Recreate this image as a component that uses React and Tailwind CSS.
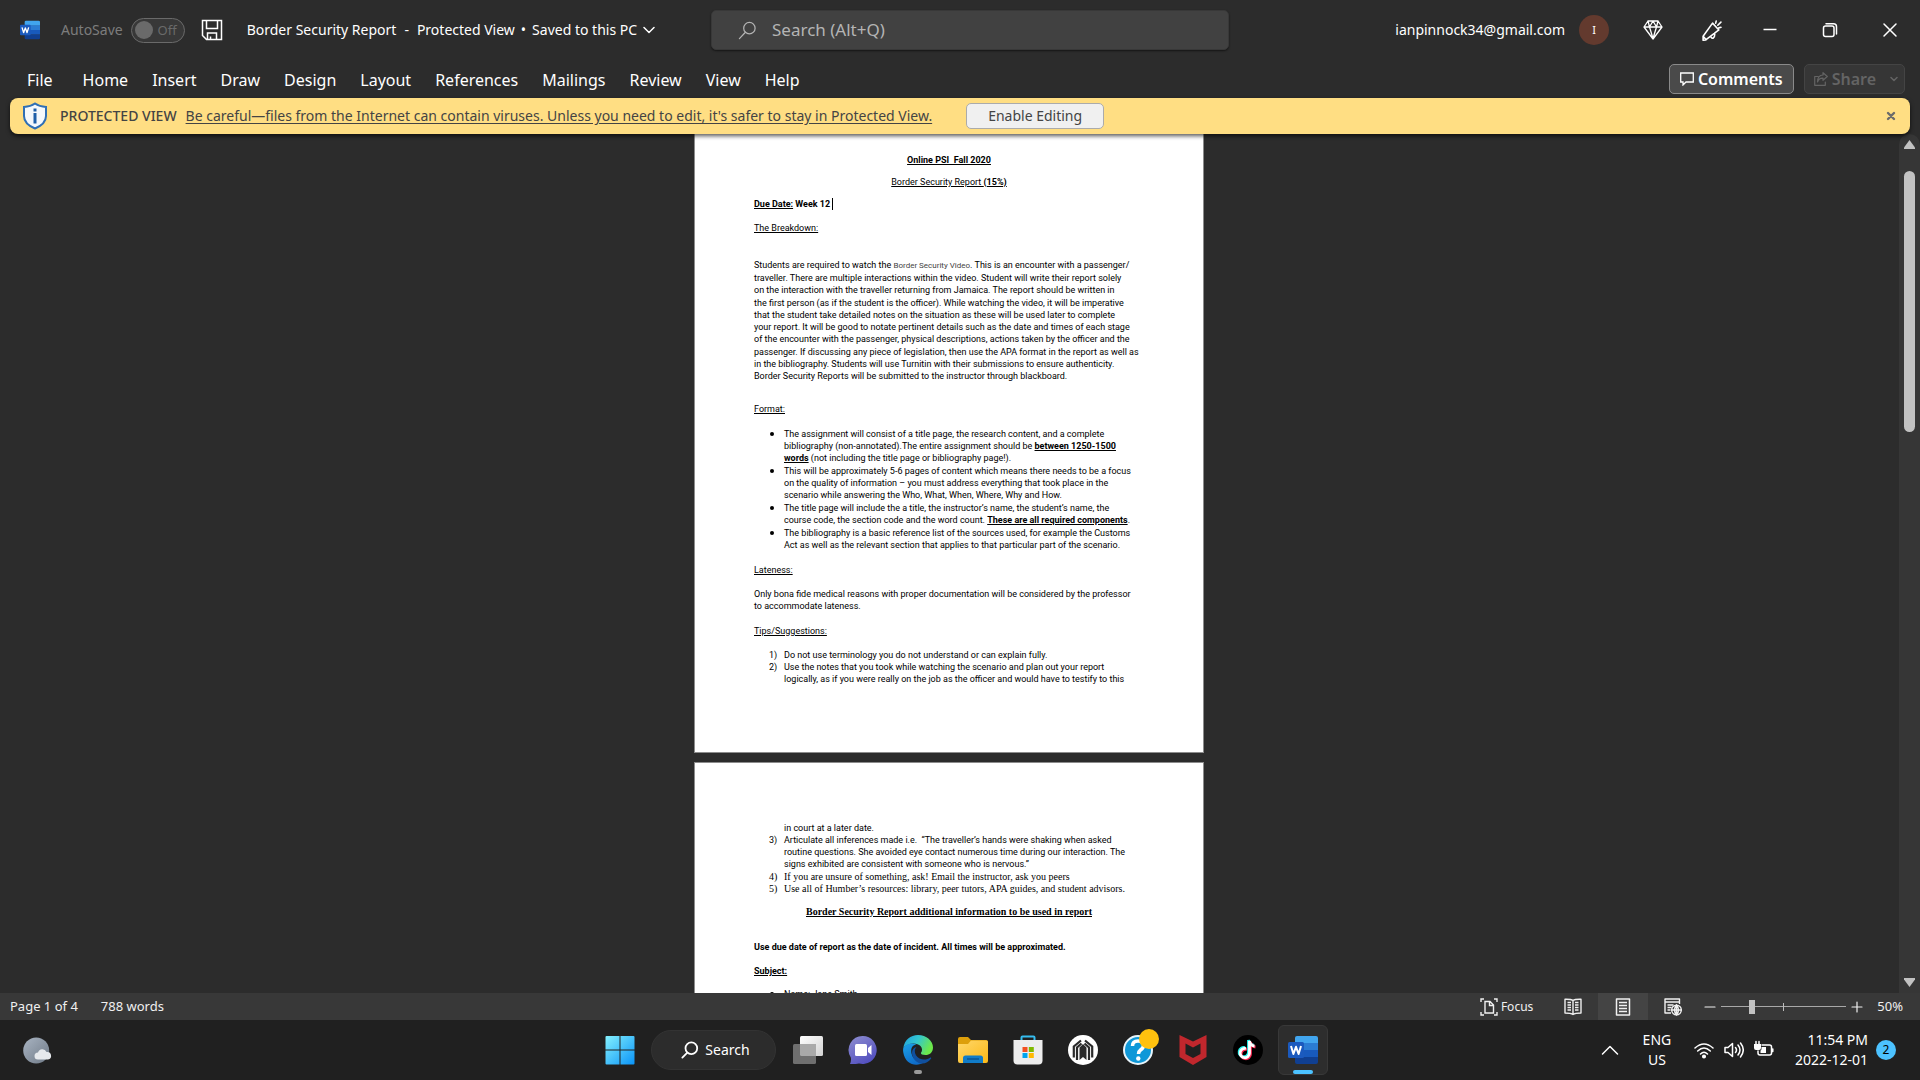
import React from "react";

function WordLogo({ className }) {
  return (
    <svg viewBox="0 0 30 28" className={className} aria-hidden="true">
      <path d="M9 0h19a2 2 0 0 1 2 2v5.5H7V2a2 2 0 0 1 2-2z" fill="#41a5ee" />
      <path d="M7 7h23v7H7z" fill="#2b7cd3" />
      <path d="M7 14h23v7H7z" fill="#185abd" />
      <path d="M7 21h23v5a2 2 0 0 1-2 2H9a2 2 0 0 1-2-2z" fill="#103f91" />
      <rect x="0" y="6" width="16" height="16" rx="1.5" fill="#1b5abe" />
      <path d="M3 10l2.4 8L8 10.800l2.600 7.200L13 10" fill="none" stroke="#fff" strokeWidth="2" strokeLinejoin="round" />
    </svg>
  );
}

function Icon({ className, width = 1.5, box = 20, children }) {
  return (
    <svg viewBox={`0 0 ${box} ${box}`} className={className} fill="none" stroke="currentColor" strokeWidth={width} strokeLinecap="round" strokeLinejoin="round" aria-hidden="true">
      {children}
    </svg>
  );
}

function TitleBar() {
  return (
    <header className="flex h-[60px] shrink-0 items-center">
      <div className="flex h-full min-w-0 flex-[691] items-center whitespace-nowrap pl-5 text-sm text-white">
        <WordLogo className="h-5 w-5" />
        <label htmlFor="autosave" className="ml-[21px] text-[#7c7c7c]">AutoSave</label>
        <button id="autosave" role="switch" aria-checked="false" className="ml-2 flex h-[25px] w-[54px] items-center justify-between rounded-full border border-[#6a6a6a] bg-[#383838] pl-[3px] pr-[7px] text-[13px] text-[#6a6a6a]">
          <span className="h-[18px] w-[18px] rounded-full bg-[#6a6a6a]" />
          Off
        </button>
        <button aria-label="Save" className="ml-4">
          <Icon className="h-[22px] w-[22px]" box={22}>
            <path d="M1.500 1.500h19v19h-15l-4-4z M5.500 1.500v8h11v-8 M6.500 20.500v-6.500h9v6.500 M9.500 20v-2.500" strokeLinecap="butt" strokeLinejoin="miter" />
          </Icon>
        </button>
        <button className="ml-6 flex items-center gap-1.5">
          <span className="flex gap-2"><span>Border Security Report</span><span>-</span><span>Protected View</span></span>
          <span>•</span>
          <span>Saved to this PC</span>
          <Icon className="h-3 w-3" box={12}><path d="M1 3.500l5 5 5-5" /></Icon>
        </button>
      </div>
      <label className="flex h-10 flex-[490] items-center rounded-[5px] border border-[#383838] bg-[#414141] pl-[26px] text-[#b4b4b4] shadow-[0_1px_2px_#0008]">
        <Icon className="h-[19px] w-[19px] shrink-0" width={1.300}><circle cx="12" cy="7.500" r="6" /><path d="M7.800 11.800L1.500 18.500" /></Icon>
        <input aria-label="Search" placeholder="Search (Alt+Q)" className="ml-[15px] w-full min-w-0 bg-transparent text-[17px] outline-none placeholder:text-[#b4b4b4]" />
      </label>
      <div className="flex flex-[669] items-center justify-end pr-[22px] text-sm text-white">
        <span>ianpinnock34@gmail.com</span>
        <button aria-label="Account" className="ml-[14px] h-[30px] w-[30px] rounded-full bg-[#633a2e] text-[11px]">I</button>
        <button aria-label="Premium" className="ml-[34px]">
          <Icon className="h-5 w-5" width={1.300}><path d="M5 1h10l4 6-9 12L1 7z M1 7h18 M6.500 7L10 18.500 13.500 7 M5 1l1.500 6L10 1l3.500 6L15 1" /></Icon>
        </button>
        <button aria-label="Coming soon" className="ml-[38px]">
          <Icon className="h-[21px] w-[21px]"><path d="M2 15.500L11 3l6 6.500-12.500 9.500-2.500.3z M2 15.500l3 3.300 M9 15.500c1.500 3.300 4.500 2 4-3 M14 3l.5-2 M16 5l3-3 M17 7.500l2-.5" /></Icon>
        </button>
        <button aria-label="Minimize" className="ml-10"><Icon className="h-4 w-4" box={16}><path d="M1.500 7.500h13" strokeLinecap="butt" /></Icon></button>
        <button aria-label="Restore" className="ml-[44px]"><Icon className="h-4 w-4" box={16}><rect x="1.500" y="4" width="10.500" height="10.500" rx="2" /><path d="M4 1.700h7.500q3 0 3 3V12" /></Icon></button>
        <button aria-label="Close" className="ml-11"><Icon className="h-4 w-4" box={16}><path d="M2 2l12 12M14 2L2 14" /></Icon></button>
      </div>
    </header>
  );
}

function RibbonTabs() {
  const tabs = ["Home", "Insert", "Draw", "Design", "Layout", "References", "Mailings", "Review", "View", "Help"];
  return (
    <nav className="flex h-[38px] shrink-0 items-center justify-between pl-[27px] pr-[15px] text-base text-white">
      <div className="flex items-center gap-6 pt-0.5">
        <button className="mr-1.5">File</button>
        {tabs.map((t) => <button key={t}>{t}</button>)}
      </div>
      <div className="flex gap-[10px] font-semibold">
        <button className="flex h-[30px] items-center gap-1 rounded-[5px] border border-[#8a8a8a] bg-[#4a4a4a] px-2.5">
          <Icon className="h-[14px] w-[14px]" box={14} width={1.300}><path d="M.7 1h12.600v9H6l-3 3v-3H.7z" strokeLinejoin="miter" /></Icon>
          Comments
        </button>
        <button disabled className="flex h-[30px] items-center gap-1 rounded-[5px] border border-[#444] bg-[#363636] pl-[9px] pr-1.5 text-[#646464]">
          <Icon className="h-[14px] w-[14px]" box={14} width={1.200}><path d="M4 4.500H.7V13.300h10.600V10 M9 .7l4.300 3.800L9 8.300V6.200C6 6 4.500 7.500 3.500 10c0-4 2-6.800 5.500-7z" /></Icon>
          Share
          <Icon className="ml-2.5 h-2 w-2" box={8}><path d="M1 2.500l3 3 3-3" /></Icon>
        </button>
      </div>
    </nav>
  );
}

function ProtectedBanner() {
  return (
    <section className="z-10 mx-[10px] flex h-9 shrink-0 items-center rounded-lg bg-[#ffde83] pl-3 pr-[14px] text-sm text-[#444] shadow-[0_2px_4px_#000a]">
      <svg viewBox="0 0 26 28" className="h-7 w-[26px]" aria-hidden="true">
        <path d="M13 1.500c3.500 2.500 7 3.300 11 3.500v9c0 6-5 10-11 12.500C7 24 2 20 2 14V5c4-.2 7.500-1 11-3.500z" fill="#f4f8fc" stroke="#2f6fb5" strokeWidth="2" />
        <path d="M11.500 6.500h3v3h-3z M11.500 11h3v10.500h-3z" fill="#1f5fa8" />
      </svg>
      <span className="ml-3 font-medium">PROTECTED VIEW</span>
      <a href="#protected" className="ml-[9px] whitespace-nowrap underline underline-offset-2">Be careful—files from the Internet can contain viruses. Unless you need to edit, it's safer to stay in Protected View.</a>
      <button className="ml-[34px] h-[26px] rounded-[5px] border border-[#ababab] bg-[#f0f0f0] px-[21px]">Enable Editing</button>
      <button aria-label="Close message" className="ml-auto text-[#6b6b6b]"><Icon className="h-[10px] w-[10px]" box={10} width={2.400}><path d="M2 2l6 6M8 2L2 8" /></Icon></button>
    </section>
  );
}

function Lines({ lines, className }) {
  return (
    <div className={className}>
      {lines.map((l, i) => <span key={i} className="block">{l}</span>)}
    </div>
  );
}

function Item({ mark, serif, lines }) {
  return (
    <li className={serif ? "flex font-['Liberation_Serif',serif] text-[10px]" : "flex"}>
      <span className="w-[15px] shrink-0">{mark}</span>
      <Lines lines={lines} />
    </li>
  );
}

const bullet = <span className="mt-1 ml-px block h-1 w-1 rounded-full bg-black" />;
const heading = "self-start underline";

function PageOne() {
  return (
    <article className="flex flex-col border-x border-b border-[#8c8c8c] bg-white px-[59px] pt-5 pb-[67px]">
      <h1 className="text-center font-bold underline whitespace-pre">Online PSI  Fall 2020</h1>
      <p className="mt-2.5 text-center underline">Border Security Report <b>(15%)</b></p>
      <p className="mt-2.5 flex font-bold whitespace-pre"><u>Due Date:</u> Week 12<span className="ml-0.5 h-3 w-px bg-black" /></p>
      <h2 className={`mt-3 ${heading}`}>The Breakdown:</h2>
      <Lines
        className="mt-[25px] flex min-h-[123px] flex-col justify-between"
        lines={[
          <>Students are required to watch the <span className="text-[8px] text-[#444]">Border Security Video</span>. This is an encounter with a passenger/</>,
          "traveller. There are multiple interactions within the video. Student will write their report solely",
          "on the interaction with the traveller returning from Jamaica. The report should be written in",
          "the first person (as if the student is the officer). While watching the video, it will be imperative",
          "that the student take detailed notes on the situation as these will be used later to complete",
          "your report. It will be good to notate pertinent details such as the date and times of each stage",
          "of the encounter with the passenger, physical descriptions, actions taken by the officer and the",
          "passenger. If discussing any piece of legislation, then use the APA format in the report as well as",
          "in the bibliography. Students will use Turnitin with their submissions to ensure authenticity.",
          "Border Security Reports will be submitted to the instructor through blackboard.",
        ]}
      />
      <h2 className={`mt-[21px] ${heading}`}>Format:</h2>
      <ul className="mt-[13px] flex flex-col gap-px pl-[15px]">
        <Item mark={bullet} lines={[
          "The assignment will consist of a title page, the research content, and a complete",
          <>bibliography (non-annotated).The entire assignment should be <b className="underline">between 1250-1500</b></>,
          <><b className="underline">words</b> (not including the title page or bibliography page!).</>,
        ]} />
        <Item mark={bullet} lines={[
          "This will be approximately 5-6 pages of content which means there needs to be a focus",
          "on the quality of information – you must address everything that took place in the",
          "scenario while answering the Who, What, When, Where, Why and How.",
        ]} />
        <Item mark={bullet} lines={[
          "The title page will include the a title, the instructor’s name, the student’s name, the",
          <>course code, the section code and the word count. <b className="underline">These are all required components</b>.</>,
        ]} />
        <Item mark={bullet} lines={[
          "The bibliography is a basic reference list of the sources used, for example the Customs",
          "Act as well as the relevant section that applies to that particular part of the scenario.",
        ]} />
      </ul>
      <h2 className={`mt-[13px] ${heading}`}>Lateness:</h2>
      <Lines className="mt-3" lines={[
        "Only bona fide medical reasons with proper documentation will be considered by the professor",
        "to accommodate lateness.",
      ]} />
      <h2 className={`mt-[13px] ${heading}`}>Tips/Suggestions:</h2>
      <ol className="mt-3 pl-[15px]">
        <Item mark="1)" lines={["Do not use terminology you do not understand or can explain fully."]} />
        <Item mark="2)" lines={[
          "Use the notes that you took while watching the scenario and plan out your report",
          "logically, as if you were really on the job as the officer and would have to testify to this",
        ]} />
      </ol>
    </article>
  );
}

function PageTwo() {
  return (
    <article className="mt-[9px] flex flex-col border border-[#8c8c8c] bg-white px-[59px] pt-[59px] pb-[67px]">
      <ol className="pl-[15px]">
        <Item lines={["in court at a later date."]} />
        <Item mark="3)" lines={[
          <span className="whitespace-pre">Articulate all inferences made i.e.  “The traveller’s hands were shaking when asked</span>,
          "routine questions. She avoided eye contact numerous time during our interaction. The",
          "signs exhibited are consistent with someone who is nervous.”",
        ]} />
      </ol>
      <ol start="4" className="mt-px pl-[15px]">
        <Item serif mark="4)" lines={["If you are unsure of something, ask! Email the instructor, ask you peers"]} />
        <Item serif mark="5)" lines={["Use all of Humber’s resources: library, peer tutors, APA guides, and student advisors."]} />
      </ol>
      <h2 className="mt-[11px] text-center font-['Liberation_Serif',serif] text-[10px] font-bold underline">Border Security Report additional information to be used in report</h2>
      <p className="mt-[23px] font-bold">Use due date of report as the date of incident. All times will be approximated.</p>
      <h2 className={`mt-3 font-bold ${heading}`}>Subject:</h2>
      <ul className="mt-[11px] pl-[15px]">
        <Item mark={bullet} lines={["Name: Jane Smith"]} />
      </ul>
    </article>
  );
}

function DocumentArea() {
  return (
    <main className="flex min-h-0 flex-1">
      <div className="flex min-w-0 flex-1 justify-center overflow-hidden pr-px">
        <div className="w-[510px] whitespace-nowrap font-[Roboto,sans-serif] text-[9px] leading-3 text-black">
          <PageOne />
          <PageTwo />
        </div>
      </div>
      <div className="flex w-[21px] flex-col items-center rounded-t-xl bg-[#363636] pt-1.5 pb-1.5 text-[#c2c2c2]">
        <svg viewBox="0 0 11 9" className="h-[9px] w-[11px]" aria-hidden="true"><path d="M5.500 0L11 7.500V9H0V7.500z" fill="currentColor" /></svg>
        <div className="mt-[22px] min-h-0 w-[11px] flex-[261] rounded-full bg-[#c2c2c2]" />
        <div className="flex-[546]" />
        <svg viewBox="0 0 11 9" className="h-[9px] w-[11px]" aria-hidden="true"><path d="M5.500 9L0 1.500V0h11v1.500z" fill="currentColor" /></svg>
      </div>
    </main>
  );
}

function StatusBar() {
  return (
    <footer className="flex h-[27px] shrink-0 items-center bg-[#383838] pl-[10px] pr-[17px] text-[13px] text-[#f0f0f0]">
      <span>Page 1 of 4</span>
      <span className="ml-[23px] mr-auto">788 words</span>
      <button className="flex items-center gap-[3px] text-xs">
        <Icon className="h-[18px] w-[18px]" box={18} width={1.400}>
          <path d="M1 4V1h3 M14 1h3v3 M17 14v3h-3 M4 17H1v-3 M5 3.500h5l3.500 3.500v8H5z M9.500 4v3.500h3.500" strokeLinecap="butt" strokeLinejoin="miter" />
        </Icon>
        Focus
      </button>
      <button aria-label="Read Mode" className="ml-[31px]">
        <Icon className="h-[18px] w-[18px]" box={18} width={1.400}>
          <path d="M9 2.500Q7 1 1 1.200V15q6 0 8 1.500Q11 15 17 15V1.200Q11 1 9 2.500z M9 2.500v14 M3.500 4.500h3.500 M3.500 7h3.500 M3.500 9.500h3.500 M3.500 12h3.500 M11 4.500h3.500 M11 7h3.500 M11 9.500h3.500 M11 12h3.500" strokeLinecap="butt" />
        </Icon>
      </button>
      <button aria-label="Print Layout" aria-pressed="true" className="ml-4 flex h-[27px] w-[50px] items-center justify-center bg-[#444]">
        <Icon className="h-[18px] w-[18px]" box={18} width={1.500}>
          <path d="M2.500 1h13v16h-13z M5 4.500h8 M5 7.500h8 M5 10.500h8 M5 13.500h8" strokeLinecap="butt" />
        </Icon>
      </button>
      <button aria-label="Web Layout" className="ml-4">
        <Icon className="h-[18px] w-[18px]" box={18} width={1.400}>
          <path d="M7 15H1V1h14.500v5 M1 4h14 M3.500 7h6 M3.500 9.500h4 M3.500 12h3" strokeLinecap="butt" />
          <circle cx="12.500" cy="12" r="4.800" fill="#383838" />
          <path d="M7.700 12h9.600 M12.500 7v10 M12.500 7q-4 5 0 10 M12.500 7q4 5 0 10" />
        </Icon>
      </button>
      <button aria-label="Zoom out" className="ml-[22px]"><Icon className="h-3 w-3" box={12} width={1.200}><path d="M1 6h10" /></Icon></button>
      <div className="relative mx-[5px] flex h-[15px] w-[125px] items-center">
        <span className="absolute top-1 left-[62px] h-2 w-px bg-[#bcbcbc]" />
        <input
          type="range"
          aria-label="Zoom"
          min="0"
          max="100"
          defaultValue="23"
          className="h-px w-full appearance-none bg-[#a8a8a8] [&::-webkit-slider-thumb]:h-[14px] [&::-webkit-slider-thumb]:w-1.5 [&::-webkit-slider-thumb]:appearance-none [&::-webkit-slider-thumb]:bg-[#c2c2c2]"
        />
      </div>
      <button aria-label="Zoom in"><Icon className="h-3 w-3" box={12} width={1.200}><path d="M1 6h10M6 1v10" /></Icon></button>
      <button className="ml-[14px]">50%</button>
    </footer>
  );
}

function Task({ label, active, running, children }) {
  return (
    <button aria-label={label} className="relative flex h-[60px] w-[55px] items-center justify-center">
      <span className={active ? "flex h-[50px] w-[50px] items-center justify-center rounded-md border border-[#383838] bg-[#2d2d2d]" : "flex"}>{children}</span>
      {active && <span className="absolute bottom-1.5 h-1 w-5 rounded-full bg-[#4cc2ff]" />}
      {running && <span className="absolute bottom-1.5 h-1 w-2 rounded-full bg-[#9a9a9a]" />}
    </button>
  );
}

const art = "h-[30px] w-[30px]";

function Taskbar() {
  return (
    <footer className="grid h-[60px] shrink-0 grid-cols-[1fr_auto_1fr] items-center bg-[#202020] text-sm text-white">
      <button aria-label="Weather" className="ml-[23px] justify-self-start">
        <svg viewBox="0 0 29 27" className="h-[27px] w-[29px]" aria-hidden="true">
          <defs><linearGradient id="moon" x1="0" y1="0" x2="1" y2="1"><stop stopColor="#a9b4c2" /><stop offset="1" stopColor="#6f7a87" /></linearGradient></defs>
          <circle cx="13.200" cy="13.500" r="13" fill="url(#moon)" />
          <path d="M15 22.500a3.500 3.500 0 0 1 0-7 4.500 4.500 0 0 1 8.500-.5 3.800 3.800 0 0 1 1.500 7.500z" fill="#e6e9ed" />
        </svg>
      </button>
      <div className="flex items-center pl-0.5">
        <Task label="Start">
          <svg viewBox="0 0 30 30" className={art} aria-hidden="true">
            <defs><linearGradient id="win" x1="0" y1="0" x2="1" y2="1"><stop stopColor="#84f0fd" /><stop offset="1" stopColor="#0a94f8" /></linearGradient></defs>
            <path d="M1.500 1h13v13.500H.5V2q0-1 1-1z M15.500 1h13q1 0 1 1v12.500h-14z M.5 15.500h14v14h-13q-1 0-1-1z M15.500 15.500h14v13q0 1-1 1h-13z" fill="url(#win)" />
          </svg>
        </Task>
        <button className="mx-1 flex h-10 w-[125px] items-center justify-center gap-1.5 rounded-full border border-[#333] bg-[#2c2c2c] pl-1">
          <Icon className="h-[18px] w-[18px]" width={2}><circle cx="11.500" cy="8" r="6.500" /><path d="M7 13l-5.500 5.500" /></Icon>
          Search
        </button>
        <Task label="Task view">
          <svg viewBox="0 0 30 30" className={art} aria-hidden="true">
            <defs><linearGradient id="tv" x1="0" y1="0" x2="1" y2="1"><stop stopColor="#fff" /><stop offset="1" stopColor="#d2d2d2" /></linearGradient></defs>
            <rect x="7" y="1" width="23" height="20" rx="1.500" fill="url(#tv)" />
            <rect x="0" y="9" width="23" height="20" rx="1.500" fill="#6f6f6f" />
            <path d="M7 9h16v12H8.500Q7 21 7 19.500z" fill="#a9a9a9" />
          </svg>
        </Task>
        <Task label="Chat">
          <svg viewBox="0 0 30 30" className={art} aria-hidden="true">
            <defs><linearGradient id="chat" x1="0" y1="0" x2=".6" y2="1"><stop stopColor="#8f8fd0" /><stop offset="1" stopColor="#5350c0" /></linearGradient></defs>
            <path d="M15 1a14 14 0 1 1-4 27.500q-4 .7-9 .5 1.500-3.500.8-6.500A14 14 0 0 1 15 1z" fill="url(#chat)" />
            <rect x="7" y="9" width="12" height="12" rx="1.500" fill="#fff" />
            <path d="M20 13l3.500-3v10L20 17z" fill="#fff" />
          </svg>
        </Task>
        <Task label="Edge" running>
          <svg viewBox="0 0 30 30" className={art} aria-hidden="true">
            <defs>
              <linearGradient id="eg" x1="0" y1="0" x2="1" y2=".4"><stop stopColor="#1f9fe0" /><stop offset=".5" stopColor="#33c6cf" /><stop offset="1" stopColor="#6ce84a" /></linearGradient>
              <linearGradient id="eb" x1="0" y1="0" x2=".5" y2="1"><stop stopColor="#1ca2e8" /><stop offset="1" stopColor="#0f6cc9" /></linearGradient>
            </defs>
            <path d="M.3 13C1.500 5 7.500 0 15 0c8.500 0 15 6 15 12.500 0 5-3.500 7.500-7.500 7.500-3 0-5-1-4.500-2.300 1.500-1.700 1.500-4.700-.5-6.700C14 7 4.500 7.500.3 13z" fill="url(#eg)" />
            <path d="M.3 13C3.500 8.500 9 7.500 13.500 9.500c-4.500.5-6 4.500-5 9 1.200 5.500 7 9.500 12.500 8.500-7 5.500-19 2.500-20.700-9.500-.3-1.700-.3-3 0-4.500z" fill="url(#eb)" />
            <path d="M13.500 12c-3 3-2 9 3 11.500 4 2 8 1 10.500-.7 1-.6 1.500.2 1 1C23 31 13 30 9.700 21.500 8 16.500 9.500 13 13.500 12z" fill="#10509f" />
          </svg>
        </Task>
        <Task label="File Explorer">
          <svg viewBox="0 0 30 30" className={art} aria-hidden="true">
            <defs><linearGradient id="fold" x1="0" y1="0" x2="1" y2="1"><stop stopColor="#ffd76a" /><stop offset="1" stopColor="#fbb917" /></linearGradient></defs>
            <path d="M0 4q0-2 2-2h8l3 3h15q2 0 2 2v8H0z" fill="#dd9f0b" />
            <path d="M0 9h10l3-3.500h15.500q1.500 0 1.500 1.500v19q0 2-2 2H2q-2 0-2-2z" fill="url(#fold)" />
            <path d="M5 28v-5q0-2.500 2.500-2.500h15Q25 20.500 25 23v5z" fill="#117cc8" />
            <path d="M9 24h12" stroke="#0a5594" strokeWidth="1.500" />
          </svg>
        </Task>
        <Task label="Microsoft Store">
          <svg viewBox="0 0 30 30" className={art} aria-hidden="true">
            <path d="M8.500 6V2.500q0-1 1-1h11q1 0 1 1V6" fill="none" stroke="#35bdf0" strokeWidth="2" />
            <path d="M.5 5h29v20.500q0 4-4 4h-21q-4 0-4-4z" fill="#ededed" />
            <path d="M9.500 12h5v5h-5z" fill="#f25022" /><path d="M15.800 12h5v5h-5z" fill="#7fba00" />
            <path d="M9.500 18h5v5h-5z" fill="#00a4ef" /><path d="M15.800 18h5v5h-5z" fill="#ffb900" />
          </svg>
        </Task>
        <Task label="Assistant">
          <svg viewBox="0 0 30 30" className={art} aria-hidden="true">
            <circle cx="15" cy="15" r="15" fill="#fff" />
            <g fill="none" stroke="#2a2a2a" strokeWidth="2.200">
              <path d="M13 5.500L5.800 11.500V22.500 M17 5.500l7.200 6V22.500" />
              <path d="M13.500 8.500L9 12.500V25 M16.500 8.500L21 12.500V25" />
            </g>
            <path d="M11.500 12.500L15 9l3.500 3.500V25L15 22l-3.500 3z" fill="#2a2a2a" />
          </svg>
        </Task>
        <Task label="Get help">
          <span className="relative flex">
            <svg viewBox="0 0 30 30" className={art} aria-hidden="true">
              <circle cx="15" cy="15" r="14" fill="#0f98d8" stroke="#e8f4fa" strokeWidth="2" />
              <path d="M9.500 11q0-5 5.500-5t5.500 4.500Q20.500 13 17.500 15q-2 1.500-2 4" fill="none" stroke="#fff" strokeWidth="3.500" />
              <circle cx="15.300" cy="23.500" r="2.200" fill="#fff" />
            </svg>
            <span className="absolute -top-1.5 -right-1.5 h-5 w-5 rounded-full bg-[#ffc10e]" />
          </span>
        </Task>
        <Task label="McAfee">
          <svg viewBox="0 0 30 30" className={art} aria-hidden="true">
            <path d="M1.500 0L15 6.500 28.500 0v22L15 30 1.500 22z M7.500 8.500v10.500l7.500 4 7.500-4V8.500L15 12.500z" fill="#c1272d" fillRule="evenodd" />
          </svg>
        </Task>
        <Task label="TikTok">
          <svg viewBox="0 0 30 30" className={art} aria-hidden="true">
            <circle cx="15" cy="15" r="15" fill="#000" />
            <g fill="none" strokeWidth="2.800">
              <path d="M12 12.500a4.700 4.700 0 1 0 3.500 4.500V5q.5 4.500 5 5" stroke="#25f4ee" />
              <path d="M14 14.500a4.700 4.700 0 1 0 3.500 4.500V7q.5 4.500 5 5" stroke="#fe2c55" />
              <path d="M13 13.500a4.700 4.700 0 1 0 3.500 4.500V6q.5 4.500 5 5" stroke="#fff" />
            </g>
          </svg>
        </Task>
        <Task label="Word" active><WordLogo className="h-7 w-[30px]" /></Task>
      </div>
      <div className="flex items-center justify-self-end pr-6">
        <button aria-label="Show hidden icons"><Icon className="h-[18px] w-[18px]" box={18}><path d="M1.500 13L9 5.500l7.500 7.500" /></Icon></button>
        <button className="ml-[23px] w-[30px] text-center leading-5">ENG<br />US</button>
        <button aria-label="Network, volume and battery" className="ml-[22px] flex gap-[10px]">
          <Icon className="h-5 w-5">
            <path d="M1 8q9-8 18 0 M3.700 11q6.300-6 12.600 0 M6.500 14q3.500-3.500 7 0" />
            <circle cx="10" cy="16.500" r="1.300" fill="currentColor" />
          </Icon>
          <Icon className="h-5 w-5"><path d="M1 7.500h3l4.500-4v13L4 12.500H1z M11.500 7.500q2 2.500 0 5 M14 5q4 5 0 10 M16.500 3q5.500 7 0 14" /></Icon>
          <Icon className="h-5 w-5">
            <path d="M8 5h7.500q2 0 2 2v6q0 2-2 2H6q-2 0-2-2v-2 M18.800 9v2.500" />
            <path d="M0 4h7v4q0 2-2 2H2q-2 0-2-2z M7.500 7h4.500v6H6.500v-2.500q1 0 1-2z" fill="currentColor" stroke="none" />
            <path d="M2 1.500v3 M5 1.500v3" />
          </Icon>
        </button>
        <button className="ml-[21px] text-right leading-5">11:54 PM<br />2022-12-01</button>
        <button aria-label="2 notifications" className="ml-2 h-5 w-5 rounded-full bg-[#4cc2ff] text-xs text-black">2</button>
      </div>
    </footer>
  );
}

export default function App() {
  return (
    <div className="flex h-screen flex-col overflow-hidden bg-[#2c2c2c] font-['Noto_Sans',sans-serif]">
      <TitleBar />
      <RibbonTabs />
      <ProtectedBanner />
      <DocumentArea />
      <StatusBar />
      <Taskbar />
    </div>
  );
}
